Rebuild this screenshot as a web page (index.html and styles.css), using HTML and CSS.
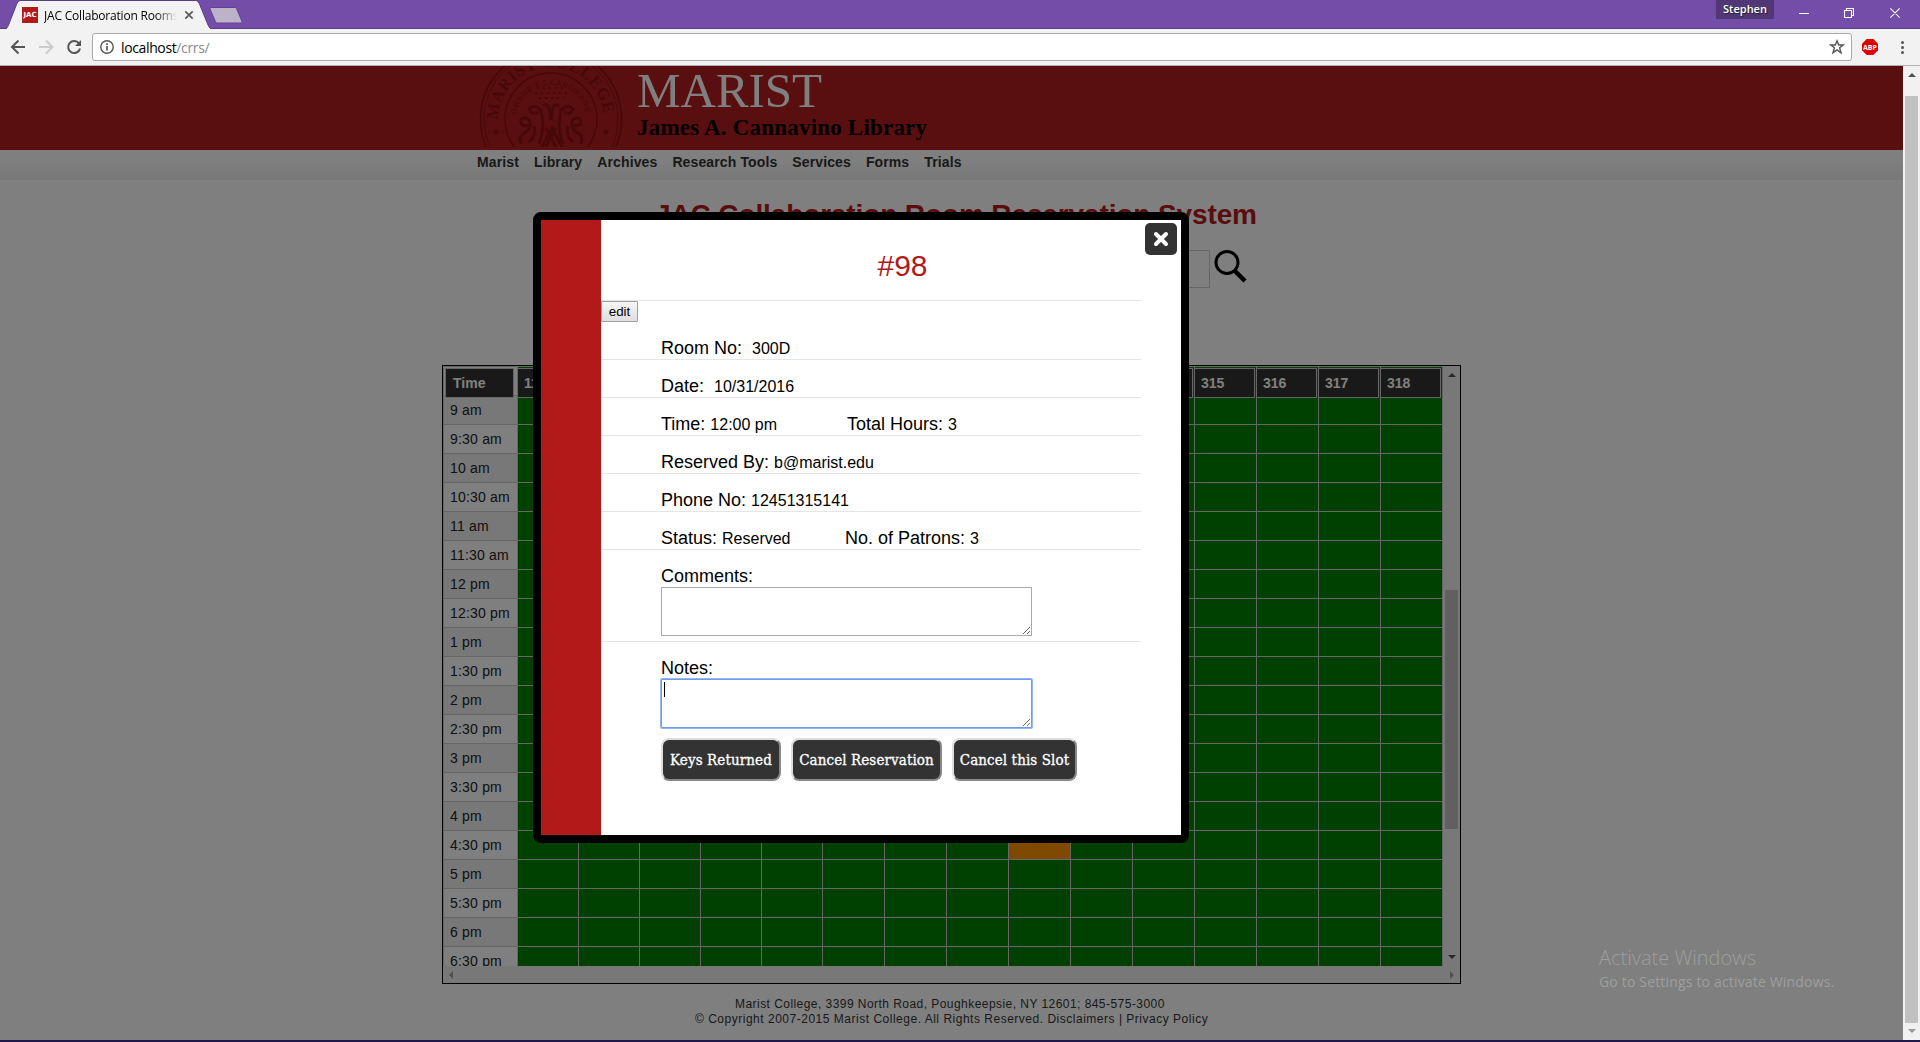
FILE: index.html
```html
<!DOCTYPE html>
<html lang="en">
<head>
<meta charset="utf-8">
<title>JAC Collaboration Rooms</title>
<link rel="stylesheet" href="styles.css">
</head>
<body>
<header class="tabstrip">
  <svg class="tab-shapes" width="250" height="29" viewBox="0 0 250 29">
    <path d="M5.5 29.5C8 27 8.500 25 9.500 22.500L16.500 4.500Q17.500 1 20 .5H196Q198 .5 199.500 4L207 22.500C208.500 26 209 28 212 29.500Z" fill="#f2f2f2" stroke="#5a3b85"/>
    <path d="M211 7.500H235Q236 7.500 236.500 8.500L242 21.500Q242.500 23 241 23H217.500Q216 23 215.500 21.800L210 9Q209.500 7.500 211 7.500Z" fill="#bcb3c8" stroke="#664196"/>
  </svg>
  <div class="tab">
    <span class="favicon">JAC</span>
    <span class="tab-title">JAC Collaboration Rooms</span>
    <svg width="10" height="10" viewBox="0 0 10 10"><path d="M1.300 1.300L8.700 8.700M8.700 1.300L1.300 8.700" stroke="#5a5a5a" stroke-width="1.700"/></svg>
  </div>
  <div class="window-controls">
    <span class="user">Stephen</span>
    <svg width="146" height="28" viewBox="0 0 146 28" fill="none" stroke="#fff" stroke-width="1.100">
      <path d="M25 13.500H35M70.500 10.500H77.500V17.500H70.500ZM72.500 10V8.500H79.500V15.500H78M116.300 8.300L125.700 17.700M125.700 8.300L116.300 17.700"/>
    </svg>
  </div>
</header>
<div class="toolbar">
  <svg width="82" height="36" viewBox="0 0 82 36" fill="none" stroke-width="2">
    <path d="M25 18H12.500M18.500 11.500L12 18L18.500 24.500" stroke="#555"/>
    <path d="M39 18H52M46 11.500L52.500 18L46 24.500" stroke="#ccc"/>
    <path d="M79 14.500A6 6 0 1 0 80 19.500" stroke="#555"/><path d="M81 11V17H75Z" fill="#555"/>
  </svg>
  <div class="omnibox">
    <svg width="14" height="14" viewBox="0 0 14 14"><circle cx="7" cy="7" r="6.200" fill="none" stroke="#555" stroke-width="1.400"/><path d="M7 6V10.500M7 3.300V5" stroke="#555" stroke-width="1.700"/></svg>
    <span class="url">localhost<span>/crrs/</span></span>
    <svg width="16" height="16" viewBox="0 0 16 16"><path d="M8 1.800L9.700 6H14.200L10.600 8.800L12 13.800L8 10.900L4 13.800L5.400 8.800L1.800 6H6.300Z" fill="none" stroke="#555" stroke-width="1.400"/></svg>
  </div>
  <svg width="58" height="36" viewBox="0 0 58 36">
    <path d="M6.700 10H13.300L18 14.700V21.300L13.300 26H6.700L2 21.300V14.700Z" fill="#d00"/>
    <text class="abp" x="10" y="20.700" text-anchor="middle">ABP</text>
    <circle cx="42.500" cy="13.500" r="1.500" fill="#555"/><circle cx="42.500" cy="18.500" r="1.500" fill="#555"/><circle cx="42.500" cy="23.500" r="1.500" fill="#555"/>
  </svg>
</div>

<div class="viewport">
  <main class="page">
    <div class="banner">
      <svg width="520" height="84" viewBox="0 0 520 84">
        <defs>
          <path id="ring-outer" d="M26 54A53 53 0 0 1 132 54"/>
          <path id="ring-inner" d="M44 54A35 35 0 0 1 114 54"/>
        </defs>
        <svg width="160" height="81">
          <g fill="none" stroke="#931010">
            <circle cx="79" cy="53" r="70.500" stroke-width="1.500"/><circle cx="79" cy="53" r="67"/>
            <circle cx="79" cy="53" r="46" stroke-width="1.500"/>
            <g stroke-width="3">
              <path d="M67 78C71 68 72 56 69 44Q62 37 57 43Q60 50 66 46"/>
              <path d="M91 78C87 68 86 56 89 44Q96 37 101 43Q98 50 92 46"/>
              <path d="M71 40Q76 36 78 45V54M87 40Q82 36 80 45V54M70 81L80 62L90 81M74 62L84 81M84 62L74 81"/>
              <path d="M57 53Q48 50 49 57Q51 61 56 59M57 53Q61 62 52 67Q46 71 49 78M62 60Q65 70 57 76"/>
              <path d="M101 53Q110 50 109 57Q107 61 102 59M101 53Q97 62 106 67Q112 71 109 78M96 60Q93 70 101 76"/>
            </g>
            <path d="M65 22H94M63 27H97M67 32H92" stroke-width="2" stroke-dasharray="2 4"/>
          </g>
          <g fill="#931010">
            <circle cx="24" cy="66" r="2.500"/><circle cx="134" cy="66" r="2.500"/>
            <text class="seal-big"><textPath href="#ring-outer" textLength="160">MARIST COLLEGE</textPath></text>
            <text class="seal-small"><textPath href="#ring-inner" startOffset="5" textLength="98">ORARE ET LABORARE</textPath></text>
          </g>
        </svg>
        <text class="logo" x="165" y="40.500" textLength="185" lengthAdjust="spacing">MARIST</text>
        <text class="sublogo" x="165" y="68.500" textLength="290" lengthAdjust="spacing">James A. Cannavino Library</text>
      </svg>
    </div>
    <nav class="nav"><a>Marist</a><a>Library</a><a>Archives</a><a>Research Tools</a><a>Services</a><a>Forms</a><a>Trials</a></nav>
    <h1 class="page-title">JAC Collaboration Room Reservation System</h1>
    <div class="search">
      <div class="search-box"></div>
      <svg width="34" height="34" viewBox="0 0 34 34" fill="none" stroke="#000"><circle cx="13" cy="12.500" r="11" stroke-width="3"/><path d="M20.500 20.500L31 31" stroke-width="4.500"/></svg>
    </div>
    <div class="schedule">
      <div class="grid" id="grid"></div>
      <div class="vbar">
        <i class="arrow up"></i><i class="thumb"></i><i class="arrow down"></i>
      </div>
      <div class="hbar"><i class="arrow left"></i><i class="arrow right"></i></div>
    </div>
    <footer class="footer">
      <div class="address">Marist College, 3399 North Road, Poughkeepsie, NY 12601; 845-575-3000</div>
      <div class="legal">© Copyright 2007-2015 Marist College. All Rights Reserved. Disclaimers | Privacy Policy</div>
    </footer>
    <div class="overlay"></div>
    <section class="modal">
      <button class="close" aria-label="Close"><svg width="16" height="16" viewBox="0 0 16 16"><path d="M3 3L13 13M13 3L3 13" stroke="#fff" stroke-width="4" stroke-linecap="round"/></svg></button>
      <h2>#98</h2>
      <div class="edit-row"><button class="edit">edit</button></div>
      <div class="row"><span class="wide">Room No:</span><b>300D</b></div>
      <div class="row"><span class="wide">Date:</span><b>10/31/2016</b></div>
      <div class="row"><div class="left-time"><span>Time:</span><b>12:00 pm</b></div><span>Total Hours:</span><b>3</b></div>
      <div class="row"><span>Reserved By:</span><b>b@marist.edu</b></div>
      <div class="row"><span>Phone No:</span><b>12451315141</b></div>
      <div class="row"><div class="left-status"><span>Status:</span><b>Reserved</b></div><span>No. of Patrons:</span><b>3</b></div>
      <div class="field lined"><label>Comments:</label><textarea></textarea></div>
      <div class="field"><label>Notes:</label><div class="focus-wrap"><textarea class="focused"></textarea><i class="caret"></i></div></div>
      <div class="actions"><button class="keys">Keys Returned</button><button class="reservation">Cancel Reservation</button><button class="slot">Cancel this Slot</button></div>
    </section>
    <div class="watermark"><div class="wm-title">Activate Windows</div><div class="wm-sub">Go to Settings to activate Windows.</div></div>
  </main>
  <div class="scrollbar"><i class="arrow up"></i><i class="thumb"></i><i class="arrow down faint"></i></div>
</div>
<div class="taskbar-edge"></div>
<script src="script.js"></script>
</body>
</html>
```
FILE: styles.css
```css
* { box-sizing: border-box; }
body { margin: 0; width: 1920px; height: 1042px; overflow: hidden; display: flex; flex-direction: column; font-family: "Liberation Sans", Arial, sans-serif; }
svg { display: block; flex: none; }

.tabstrip { height: 29px; background: #744da9; border-bottom: 1px solid #5a3b85; display: flex; justify-content: space-between; position: relative; flex: none; }
.tab-shapes { position: absolute; left: 0; top: 0; }
.tab { position: relative; display: flex; align-items: center; padding: 1px 0 0 22px; height: 29px; font: 12px "Open Sans", "Noto Sans", sans-serif; }
.favicon { width: 16px; height: 16px; background: #b21a1a; color: #fff; font: bold 7px/16px "DejaVu Sans", sans-serif; text-align: center; margin-right: 6px; }
.tab-title { width: 133px; overflow: hidden; white-space: nowrap; margin-right: 7px; letter-spacing: -.2px; -webkit-mask-image: linear-gradient(90deg, #000 84%, transparent); mask-image: linear-gradient(90deg, #000 84%, transparent); }
.window-controls { display: flex; align-items: flex-start; }
.user { width: 58px; height: 19px; background: #513776; color: #fff; font: 600 11px/18px "Open Sans", sans-serif; text-align: center; text-shadow: 1px 1px 1px #222; }

.toolbar { height: 37px; background: #f2f2f2; border-bottom: 1px solid #b0aeb0; display: flex; flex: none; }
.omnibox { margin: 4px 0 0 10px; width: 1760px; height: 28px; background: #fff; border: 1px solid #a9a9a9; border-radius: 3px; display: flex; align-items: center; padding: 0 6px 0 7px; }
.url { flex: 1; margin-left: 7px; font: 14px "Open Sans", "Noto Sans", sans-serif; letter-spacing: -.37px; }
.url span { color: #888; }
.toolbar > svg:last-child { margin-left: 8px; }
.abp { font: bold 7px "Open Sans", sans-serif; fill: #fff; }

.viewport { display: flex; height: 974px; flex: none; }
.page { width: 1903px; position: relative; display: flex; flex-direction: column; background: #fff; overflow: hidden; }
.banner { height: 84px; background: #b21e1e; padding-left: 472px; flex: none; }
.seal-big { font: bold 17px "Liberation Serif", serif; }
.seal-small { font: 8px "Liberation Sans", sans-serif; }
.logo { font: 49px "Liberation Serif", serif; fill: #fff; }
.sublogo { font: bold 23px "Liberation Serif", serif; fill: #000; }
.nav { height: 30px; flex: none; background: linear-gradient(#fff, #fefefe 40%, #f0f0f0); display: flex; gap: 15px; padding: 4px 0 0 477px; font: bold 14px/16px "Liberation Sans", Arial, sans-serif; letter-spacing: .12px; color: #333; }
.page-title { margin: 18px 0 0 655px; font: bold 28px/34px "Liberation Sans", Arial, sans-serif; letter-spacing: -.12px; color: #b21a1a; white-space: nowrap; }
.search { display: flex; gap: 4px; margin: 18px 0 0 690px; height: 38px; }
.search-box { width: 520px; border: 1px solid #ccc; }
.schedule { margin: 77px 0 0 442px; width: 1019px; height: 619px; border: 1px solid #000; display: grid; grid-template: 600px 17px / 1000px 17px; flex: none; background: #f1f1f1; }
.grid { overflow: hidden; background: #fff; }
.grid-row { display: grid; grid-template-columns: 74px repeat(5, 61px) repeat(10, 62px) 1px; height: 29px; font-size: 14px; color: #222; }
.grid-row > div { border: solid #ccc; border-width: 1px 0 0 1px; }
.hour { padding: 6px 0 0 6px; line-height: 16px; white-space: nowrap; letter-spacing: .2px; }
.grid-row:nth-child(even) .hour { background: #f0f0f0; }
.free { background: #008000; }
.held { background: #ff9500; }
.grid-head { position: relative; z-index: 1; }
.head-cell { margin: 1px 0 0 -1px; width: 61px; height: 30px; border: 1px solid #ccc; background: #333; color: #fff; font: bold 14px/28px "Liberation Sans", Arial, sans-serif; padding-left: 6px; }
.time-head { margin-left: 1px; width: 69px; padding-left: 7px; }

.vbar, .scrollbar { width: 17px; background: #f1f1f1; display: flex; flex-direction: column; align-items: center; }
.thumb { width: 13px; background: #c1c1c1; }
.vbar .thumb { height: 239px; margin-top: 213px; }
.vbar .down { margin-top: 126px; }
.scrollbar .thumb { height: 927px; margin-top: 19px; }
.scrollbar .down { margin-top: 6px; }
.arrow { width: 0; height: 0; border: 4px solid transparent; }
.up { border-top: 0; border-bottom-color: #505050; margin-top: 7px; }
.down { border-bottom: 0; border-top-color: #505050; }
.faint { border-top-color: #999; }
.hbar { grid-column: 1 / 3; display: flex; justify-content: space-between; padding: 5px 6px 0 6px; }
.left { border-left: 0; border-right-color: #a3a3a3; }
.right { border-right: 0; border-left-color: #a3a3a3; }

.footer { margin-top: 13px; font-size: 12px; line-height: 15px; color: #333; white-space: nowrap; }
.address { margin-left: 735px; letter-spacing: .45px; }
.legal { margin-left: 695px; letter-spacing: .51px; }

.overlay { position: absolute; inset: 0; background: rgba(0, 0, 0, .5); z-index: 2; }
.modal { position: absolute; z-index: 3; left: 533px; top: 146px; width: 656px; height: 631px; border: 8px solid #000; border-radius: 8px; background: linear-gradient(90deg, #b21a1a 60px, #fff 60px) padding-box; padding: 0 40px 0 60px; color: #000; }
.close { position: absolute; right: 4px; top: 3px; width: 32px; height: 32px; border: 0; border-radius: 5px; background: #333; padding: 8px; }
.modal h2 { margin: 0; height: 81px; border-bottom: 1px solid #e5e5e5; padding: 29px 0 0 276.5px; font: 30px/34px "Liberation Sans", Arial, sans-serif; color: #b21a1a; }
.edit-row { height: 21px; display: flex; }
.edit { width: 37px; height: 21px; padding: 0; border: 1px solid #a0a0a0; border-radius: 1px; background: linear-gradient(#f6f6f6, #dedede); font: 13.33px "Liberation Sans", Arial, sans-serif; }
.row { height: 38px; border-bottom: 1px solid #e5e5e5; display: flex; align-items: baseline; padding: 16px 0 0 60px; font-size: 18px; line-height: 20px; gap: 5px; white-space: nowrap; }
.row b { font-weight: normal; font-size: 16px; }
.row .wide { margin-right: 5px; }
.left-time, .left-status { display: flex; gap: 5px; align-items: baseline; width: 181px; }
.left-status { width: 179px; }
.field { padding: 16px 0 0 60px; font-size: 18px; line-height: 20px; }
.lined { height: 92px; border-bottom: 1px solid #e5e5e5; }
.field label { display: block; height: 21px; }
.modal textarea { display: block; width: 371px; height: 49px; border: 1px solid #a9a9a9; padding: 2px; background: #fff; outline: 0; }
.focus-wrap { position: relative; }
.modal .focused { border-color: #6f9ce8; box-shadow: 0 0 0 1px #94b8f2; border-radius: 1px; }
.caret { position: absolute; left: 3px; top: 3px; width: 1px; height: 15px; background: #000; }
.actions { display: flex; gap: 10px; padding: 10px 0 0 60px; }
.actions button { height: 43px; padding: 0; border: 2px solid; border-color: #ddd #888 #888 #ddd; border-radius: 8px; background: #333; color: #fff; font: 15px "DejaVu Serif Condensed", "DejaVu Serif", serif; letter-spacing: .1px; -webkit-text-stroke: .3px #fff; white-space: nowrap; }
.keys { width: 120px; }
.reservation { width: 151px; }
.slot { width: 125px; }
.watermark { position: absolute; z-index: 4; left: 1599px; top: 878px; color: #9e9e9e; font-family: "Open Sans", "Noto Sans", sans-serif; white-space: nowrap; }
.wm-title { font-size: 20px; line-height: 28px; font-weight: 300; }
.wm-sub { font-size: 14px; line-height: 20px; letter-spacing: .17px; }
.taskbar-edge { height: 2px; background: #20174a; flex: none; }
```
FILE: script.js
```js
const rooms = ["111", "112", "113", "300A", "300B", "300C", "300D", "301", "302", "313", "314", "315", "316", "317", "318"];
const hours = ["9 am", "9:30 am", "10 am", "10:30 am", "11 am", "11:30 am", "12 pm", "12:30 pm", "1 pm", "1:30 pm",
  "2 pm", "2:30 pm", "3 pm", "3:30 pm", "4 pm", "4:30 pm", "5 pm", "5:30 pm", "6 pm", "6:30 pm"];
const held = { "4:30 pm": 8 };
const head = '<div class="grid-row grid-head"><div><div class="head-cell time-head">Time</div></div>' +
  rooms.map(r => `<div class="free"><div class="head-cell">${r}</div></div>`).join("") + "<div></div></div>";
const rows = hours.map(h => `<div class="grid-row"><div class="hour">${h}</div>` +
  rooms.map((r, i) => `<div class="${held[h] === i ? "held" : "free"}"></div>`).join("") + "<div></div></div>").join("");
document.getElementById("grid").innerHTML = head + rows;
```
